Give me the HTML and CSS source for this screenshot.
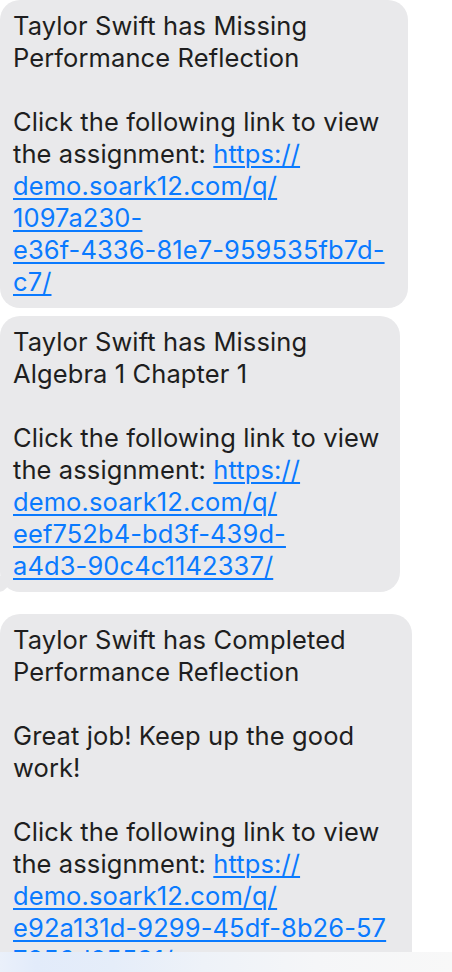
FILE: index.html
```html
<!DOCTYPE html>
<html lang="en">
<head>
<meta charset="utf-8">
<title>Messages</title>
<link rel="stylesheet" href="styles.css">
</head>
<body>
<main class="thread">
  <div class="bubble bubble-a">
    <p>Taylor Swift has Missing<br>Performance Reflection</p>
    <p>Click the following link to view<br>the assignment: <a href="#">https://<br>demo.soark12.com/q/<br>1097a230-<br>e36f-4336-81e7-959535fb7d-<br>c7/</a></p>
  </div>
  <div class="bubble bubble-b tail">
    <p>Taylor Swift has Missing<br>Algebra 1 Chapter 1</p>
    <p>Click the following link to view<br>the assignment: <a href="#">https://<br>demo.soark12.com/q/<br>eef752b4-bd3f-439d-<br>a4d3-90c4c1142337/</a></p>
  </div>
  <div class="bubble bubble-c">
    <p>Taylor Swift has Completed<br>Performance Reflection</p>
    <p>Great job! Keep up the good<br>work!</p>
    <p>Click the following link to view<br>the assignment: <a href="#">https://<br>demo.soark12.com/q/<br>e92a131d-9299-45df-8b26-57<br>7256d25591/</a></p>
  </div>
</main>
<div class="fade"></div>
</body>
</html>
```
FILE: styles.css
```css
html, body {
  margin: 0;
  padding: 0;
  background: #ffffff;
}
body {
  font-family: Inter, "Noto Sans", sans-serif;
  font-size: 25.5px;
  letter-spacing: 0.1px;
  line-height: 32px;
  color: #1e1e20;
  overflow: hidden;
}
.thread {
  display: flex;
  flex-direction: column;
  align-items: flex-start;
}
.bubble {
  position: relative;
  box-sizing: border-box;
  background: #e9e9eb;
  border-radius: 20px;
  padding: 10px 0 10px 13px;
  white-space: nowrap;
}
.bubble p {
  margin: 0;
}
.bubble p + p {
  margin-top: 32px;
}
.bubble a {
  color: #0a7aff;
  text-decoration: underline;
  text-decoration-thickness: 1.5px;
  text-underline-offset: 3px;
}
.bubble-a {
  width: 408px;
}
.bubble-b {
  width: 400px;
  margin-top: 8px;
}
.bubble-c {
  width: 412px;
  margin-top: 22px;
}
.tail::before {
  content: "";
  position: absolute;
  left: -4px;
  bottom: 0;
  width: 14px;
  height: 16px;
  background: #e9e9eb;
  border-bottom-right-radius: 12px 14px;
}
.fade {
  position: fixed;
  left: 0;
  right: 0;
  bottom: 0;
  height: 20px;
  background: linear-gradient(90deg, #eaf0fa 0%, #e2ebfa 8%, #e5edf9 25%, #eef2f8 45%, #f5f6f8 70%, #f8f8f8 100%);
}
```
